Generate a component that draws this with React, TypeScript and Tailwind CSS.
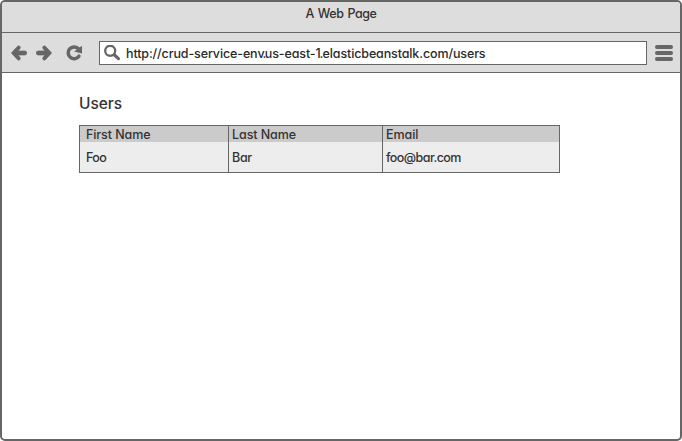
import type { ReactNode } from 'react';

function Label({ children, className = '' }: { children: ReactNode; className?: string }) {
  return <span className={`block w-max whitespace-nowrap ${className}`}>{children}</span>;
}

function BackIcon() {
  return (
    <svg className="block h-4 w-4" viewBox="0 0 16 16">
      <path
        d="M0.4 8L6.4 1.4Q7.5 0.4 8.7 1.2Q9.9 2.3 8.9 3.7L6.9 6H14Q15.7 6.1 15.7 8Q15.7 9.9 14 10H6.9L8.9 12.3Q9.9 13.7 8.7 14.8Q7.5 15.6 6.4 14.6Z"
        fill="#666"
        stroke="#666"
        strokeWidth="0.7"
      />
    </svg>
  );
}

function ReloadIcon() {
  return (
    <svg className="block h-4 w-4" viewBox="0 0 16 16">
      <path d="M12.2 3.6A5.9 5.9 0 1 0 12.9 11.2" fill="none" stroke="#666" strokeWidth="3.5" strokeLinecap="round" />
      <path d="M16 0.7V8.4L8.1 6.6Z" fill="#666" />
    </svg>
  );
}

function SearchIcon() {
  return (
    <svg className="block h-4 w-4" viewBox="0 0 16 16" fill="none" stroke="#666">
      <circle cx="6.2" cy="5.8" r="5" strokeWidth="2.3" />
      <path d="M10.2 9.8L14.4 13.6" strokeWidth="3.2" strokeLinecap="round" />
    </svg>
  );
}

type ColumnProps = {
  title: string;
  value: string;
  className: string;
  valueClassName?: string;
};

function Column({ title, value, className, valueClassName }: ColumnProps) {
  return (
    <div className={`flex flex-col ${className}`}>
      <div className="h-4 bg-[#cbcbcb] leading-[17px]">
        <Label className="tracking-[-0.08px]">{title}</Label>
      </div>
      <div className="h-[30px] bg-[#ededed] leading-[32px]">
        <Label className={valueClassName}>{value}</Label>
      </div>
    </div>
  );
}

export default function App() {
  return (
    <div className="flex h-[441px] w-[682px] flex-col overflow-hidden rounded-[5px] border-2 border-[#666] bg-white font-['Inter',sans-serif] text-[12.5px] font-medium text-[#333] [font-feature-settings:'cv11']">
      <header className="flex h-[31px] shrink-0 justify-center border-b border-[#666] bg-[#ddd] leading-[23px]">
        <Label className="tracking-[-0.42px] [word-spacing:1px]">A Web Page</Label>
      </header>
      <nav className="flex h-10 shrink-0 items-center border-b border-[#666] bg-[#ddd] pl-[9px]">
        <BackIcon />
        <div className="ml-[9px] -scale-x-100">
          <BackIcon />
        </div>
        <div className="ml-[14px]">
          <ReloadIcon />
        </div>
        <div className="ml-[17px] flex h-6 w-[548px] items-center border border-[#666] bg-white pl-[4px]">
          <SearchIcon />
          <Label className="ml-[6px] pt-[2px] leading-5 tracking-[-0.12px] text-[#2a2a2a]">
            http://crud-service-en
            <span className="tracking-[-1.6px]">v.</span>
            us-east-
            <span className="tracking-[-1.1px]">1</span>
            <span className="tracking-[-0.8px]">.</span>
            elasticbeanstalk.com/users
          </Label>
        </div>
        <div className="ml-2 flex w-[18px] flex-col gap-[2px]">
          <div className="h-1 rounded-full bg-[#666]" />
          <div className="h-1 rounded-full bg-[#666]" />
          <div className="h-1 rounded-full bg-[#666]" />
        </div>
      </nav>
      <main className="pl-[77px] pt-[20px]">
        <h1 className="h-8 text-[15.5px] leading-[21px] tracking-[-0.05px]">Users</h1>
        <div className="flex w-[481px] border border-[#666]">
          <Column
            title="First Name"
            value="Foo"
            className="w-[149px] border-r border-[#666] [&>div]:pl-[6px]"
            valueClassName="tracking-[-0.6px]"
          />
          <Column
            title="Last Name"
            value="Bar"
            className="w-[154px] border-r border-[#666] [&>div]:pl-[3px]"
            valueClassName="tracking-[-0.3px]"
          />
          <Column
            title="Email"
            value="foo@bar.com"
            className="flex-1 [&>div]:pl-[3px]"
            valueClassName="tracking-[-0.55px]"
          />
        </div>
      </main>
    </div>
  );
}
